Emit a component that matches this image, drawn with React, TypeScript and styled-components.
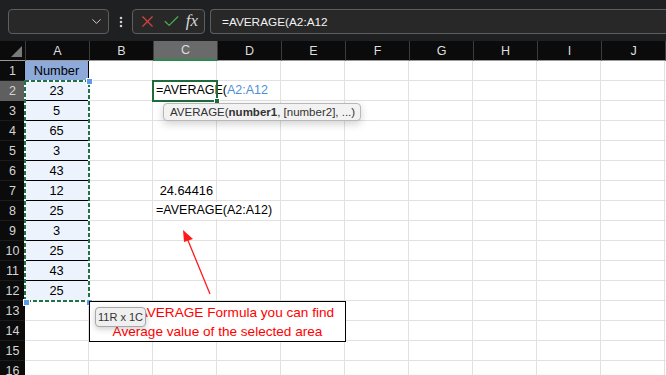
import React from 'react';
import styled, { createGlobalStyle } from 'styled-components';
import { ChevronDown, X, Check, EllipsisVertical } from 'lucide-react';

const GlobalStyle = createGlobalStyle`
    body {
        margin: 0;
        background: #ffffff;
        overflow: hidden;
    }
`;

const Page = styled.div`
    width: 666px;
    height: 375px;
    overflow: hidden;
    font-family: "Liberation Sans", Arial, sans-serif;
`;

const Toolbar = styled.div`
    height: 41px;
    box-sizing: border-box;
    padding: 9px 0 7px 8px;
    display: flex;
    align-items: stretch;
    background: #1f2022;
`;

const Box = styled.div`
    height: 25px;
    box-sizing: border-box;
    border: 1px solid #5e5e5e;
    border-radius: 4px;
    background: #282828;
    display: flex;
    align-items: center;
`;

const NameBox = styled(Box)`
    width: 101px;
    justify-content: flex-end;
    padding-right: 4px;
    color: #cfcfcf;
`;

const Dots = styled.div`
    width: 23px;
    display: flex;
    align-items: center;
    justify-content: center;
    color: #cfcfcf;
`;

const FxBox = styled(Box)`
    width: 73px;
    padding: 0 6px 0 5px;
    justify-content: space-between;
`;

const Fx = styled.span`
    font-family: "Liberation Serif", "Times New Roman", serif;
    font-style: italic;
    font-size: 17px;
    color: #d8d8d8;
    margin-top: -2px;
`;

const FormulaBox = styled(Box)`
    flex: 1;
    margin-left: 5px;
    border-right: 0;
    border-radius: 4px 0 0 4px;
    padding-left: 11px;
    color: #f2f2f2;
    font-size: 11.8px;
`;

const SheetWrap = styled.div`
    position: relative;
`;

const Sheet = styled.div`
    display: grid;
    grid-template-columns: 25px repeat(10, 64px) 1fr;
    grid-auto-rows: 20px;
`;

const Corner = styled.div`
    background: #0b0b0b;
    border-bottom: 1px solid #9a9a9a;
    position: relative;
    &::after {
        content: "";
        position: absolute;
        right: 3px;
        bottom: 3px;
        border-style: solid;
        border-width: 0 0 11px 11px;
        border-color: transparent transparent #7a7a7a transparent;
    }
`;

const ColHeader = styled.div<{ $active?: boolean }>`
    box-sizing: border-box;
    background: ${p => (p.$active ? '#6a6a6a' : '#0b0b0b')};
    border-left: 1px solid #3c3c3c;
    border-bottom: ${p => (p.$active ? '2px solid #2a8a4f' : '1px solid #9a9a9a')};
    color: #dedede;
    font-size: 12.5px;
    display: flex;
    align-items: center;
    justify-content: center;
`;

const RowHeader = styled.div<{ $active?: boolean }>`
    box-sizing: border-box;
    background: ${p => (p.$active ? '#5f5f5f' : '#0b0b0b')};
    border-bottom: 1px solid ${p => (p.$active ? '#5f5f5f' : '#1c1c1c')};
    color: #d4d4d4;
    font-size: 12.5px;
    display: flex;
    align-items: center;
    justify-content: center;
`;

const Cell = styled.div<{ $fill?: string; $align?: string; $table?: boolean }>`
    box-sizing: border-box;
    position: relative;
    background: ${p => p.$fill || 'transparent'};
    border-right: 1px solid ${p => (p.$table ? '#000000' : '#e1e1e1')};
    border-bottom: 1px solid ${p => (p.$table ? '#000000' : '#e1e1e1')};
    border-left: ${p => (p.$table ? '1px solid #000000' : '0')};
    margin-left: ${p => (p.$table ? '-1px' : '0')};
    color: #000000;
    font-size: 12.8px;
    white-space: nowrap;
    display: flex;
    align-items: center;
    justify-content: ${p => p.$align || 'flex-start'};
    padding: 0 3px;
`;

const Overflow = styled.span`
    position: absolute;
    left: 3px;
    top: 1px;
    line-height: 17px;
    font-size: 12.5px;
    padding-right: 2px;
    background: #ffffff;
    z-index: 1;
`;

const RefText = styled.span`
    color: #4f8fd8;
`;

const Marquee = styled.svg`
    position: absolute;
    left: 24px;
    top: 39px;
    overflow: visible;
    z-index: 2;
`;

const Handle = styled.div<{ $x: number; $y: number }>`
    position: absolute;
    left: ${p => p.$x}px;
    top: ${p => p.$y}px;
    width: 5px;
    height: 5px;
    background: #5b9be8;
    border: 1px solid #ffffff;
    z-index: 3;
`;

const ActiveCell = styled.div`
    position: absolute;
    left: 152px;
    top: 39px;
    width: 66px;
    height: 22px;
    box-sizing: border-box;
    border: 2px solid #1e6b3c;
    z-index: 2;
    &::after {
        content: "";
        position: absolute;
        right: -4px;
        bottom: -4px;
        width: 4px;
        height: 4px;
        background: #1e6b3c;
        border: 1px solid #ffffff;
    }
`;

const Tooltip = styled.div`
    position: absolute;
    left: 163px;
    top: 62px;
    height: 18px;
    box-sizing: border-box;
    padding: 0 5px 0 6px;
    background: #f2f2f2;
    border: 1px solid #b8b8b8;
    border-radius: 4px;
    box-shadow: 0 3px 8px rgba(0, 0, 0, 0.18);
    color: #333333;
    font-size: 11.5px;
    display: flex;
    align-items: center;
    white-space: nowrap;
    z-index: 4;
    b {
        font-weight: 700;
    }
`;

const Arrow = styled.svg`
    position: absolute;
    left: 0;
    top: 0;
    z-index: 3;
`;

const Note = styled.div`
    position: absolute;
    left: 89px;
    top: 260px;
    width: 257px;
    height: 41px;
    box-sizing: border-box;
    border: 1px solid #000000;
    background: #ffffff;
    color: #ff0000;
    font-size: 13.6px;
    line-height: 19px;
    text-align: center;
    padding-top: 1px;
    z-index: 4;
`;

const Badge = styled.div`
    position: absolute;
    left: 95px;
    top: 266px;
    height: 20px;
    box-sizing: border-box;
    padding: 0 2px;
    background: #efefef;
    border: 1px solid #a8a8a8;
    border-radius: 4px;
    box-shadow: 0 2px 6px rgba(0, 0, 0, 0.2);
    color: #333333;
    font-size: 11px;
    display: flex;
    align-items: center;
    white-space: nowrap;
    z-index: 5;
`;

const columns = ['A', 'B', 'C', 'D', 'E', 'F', 'G', 'H', 'I', 'J'];
const numbers = ['23', '5', '65', '3', '43', '12', '25', '3', '25', '43', '25'];

function renderRow(row: number) {
    const cells: React.ReactNode[] = [];
    cells.push(<RowHeader key="h" $active={row === 2}>{row}</RowHeader>);
    columns.forEach((col) => {
        const key = `${col}${row}`;
        if (col === 'A' && row === 1) {
            cells.push(<Cell key={key} $fill="#8eaadb" $align="center" $table>Number</Cell>);
        } else if (col === 'A' && row <= 12) {
            cells.push(<Cell key={key} $fill="#edf3fc" $align="center" $table>{numbers[row - 2]}</Cell>);
        } else if (col === 'C' && row === 2) {
            cells.push(
                <Cell key={key}>
                    <Overflow>=AVERAGE(<RefText>A2:A12</RefText></Overflow>
                </Cell>
            );
        } else if (col === 'C' && row === 7) {
            cells.push(<Cell key={key} $align="flex-end">24.64416</Cell>);
        } else if (col === 'C' && row === 8) {
            cells.push(
                <Cell key={key}>
                    <Overflow>=AVERAGE(A2:A12)</Overflow>
                </Cell>
            );
        } else {
            cells.push(<Cell key={key} />);
        }
    });
    cells.push(<Cell key="rest" />);
    return cells;
}

function App() {
    const rows = Array.from({ length: 16 }, (_, i) => i + 1);
    return (
        <Page>
            <GlobalStyle />
            <Toolbar>
                <NameBox><ChevronDown size={15} strokeWidth={1.6} /></NameBox>
                <Dots><EllipsisVertical size={14} strokeWidth={2.4} /></Dots>
                <FxBox>
                    <X size={19} color="#e0413e" strokeWidth={1.4} />
                    <Check size={19} color="#4cb551" strokeWidth={1.4} />
                    <Fx>fx</Fx>
                </FxBox>
                <FormulaBox>=AVERAGE(A2:A12</FormulaBox>
            </Toolbar>
            <SheetWrap>
                <Sheet>
                    <Corner />
                    {columns.map((c) => (
                        <ColHeader key={c} $active={c === 'C'}>{c}</ColHeader>
                    ))}
                    <ColHeader />
                    {rows.map((r) => renderRow(r))}
                </Sheet>
                <Marquee width="66" height="222">
                    <rect x="1" y="1" width="64" height="220" fill="none" stroke="#ffffff" strokeWidth="2" />
                    <rect x="1" y="1" width="64" height="220" fill="none" stroke="#217346" strokeWidth="2" strokeDasharray="4 2" />
                </Marquee>
                <Handle $x={86} $y={37} />
                <Handle $x={23} $y={258} />
                <Handle $x={86} $y={258} />
                <ActiveCell />
                <Tooltip>AVERAGE(<b>number1</b>, [number2], ...)</Tooltip>
                <Arrow width="666" height="334">
                    <line x1="210" y1="253" x2="187" y2="197" stroke="#ff1a1a" strokeWidth="1.3" />
                    <polygon points="183,189 193,198 184,201" fill="#ff1a1a" />
                </Arrow>
                <Note>
                    Using AVERAGE Formula you can find
                    <br />
                    Average value of the selected area
                </Note>
                <Badge>11R x 1C</Badge>
            </SheetWrap>
        </Page>
    );
}

export default App;
